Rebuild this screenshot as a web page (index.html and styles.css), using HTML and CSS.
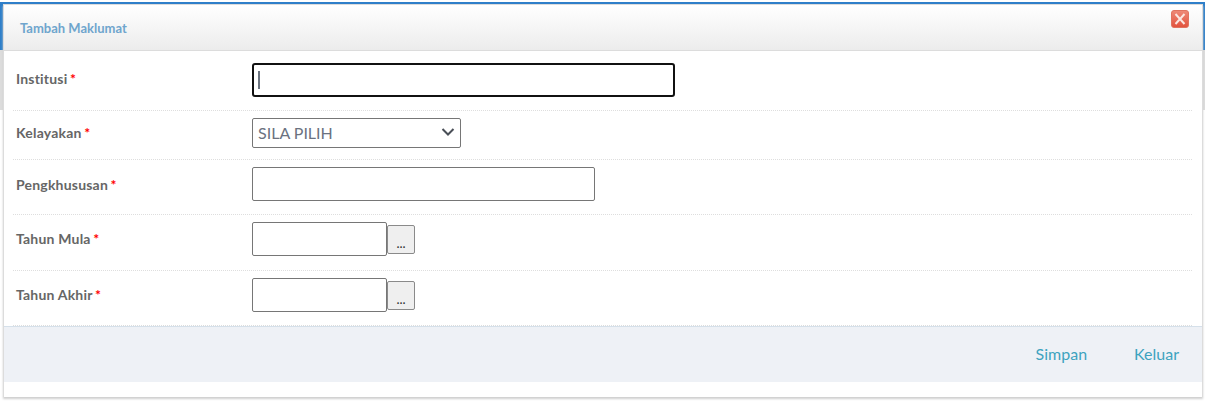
FILE: index.html
```html
<!DOCTYPE html>
<html>
<head>
  <link rel="stylesheet" href="styles.css">
</head>
<body>

<div class="page">
  <div class="side-strip strip-left"></div>
  <div class="side-strip strip-right"></div>
  <div class="modal">
    <div class="modal-header">
      <span class="modal-title">Tambah Maklumat</span>
      <button class="close-btn" type="button">
        <svg width="18" height="18" viewBox="0 0 18 18">
          <defs>
            <linearGradient id="closeFill" x1="0" y1="0" x2="0" y2="1">
              <stop offset="0" stop-color="#ee8a78"/>
              <stop offset="1" stop-color="#e2513c"/>
            </linearGradient>
          </defs>
          <rect x="0.5" y="0.5" width="17" height="17" rx="2.5" fill="url(#closeFill)" stroke="#e0735f"/>
          <path d="M4.5 4 L13.5 14 M13.5 4 L4.5 14" stroke="#fbe6e0" stroke-width="2"/>
        </svg>
      </button>
    </div>

    <form class="modal-body">
      <div class="form-row row-first">
        <label class="form-label">Institusi <span class="req">*</span></label>
        <div class="input-focus"><span class="caret"></span></div>
      </div>
      <div class="form-row row-select">
        <label class="form-label">Kelayakan <span class="req">*</span></label>
        <div class="select-box">
          <span>SILA PILIH</span>
          <svg width="14" height="8" viewBox="0 0 14 8"><path d="M1.5 1 L7 6.5 L12.5 1" fill="none" stroke="#4a4f57" stroke-width="2"/></svg>
        </div>
      </div>
      <div class="form-row row-text">
        <label class="form-label">Pengkhususan <span class="req">*</span></label>
        <input class="input-text input-wide" type="text">
      </div>
      <div class="form-row row-year">
        <label class="form-label">Tahun Mula <span class="req">*</span></label>
        <input class="input-text input-year" type="text">
        <button class="dots-btn" type="button">...</button>
      </div>
      <div class="form-row row-year row-last">
        <label class="form-label">Tahun Akhir <span class="req">*</span></label>
        <input class="input-text input-year" type="text">
        <button class="dots-btn" type="button">...</button>
      </div>
    </form>

    <div class="modal-footer">
      <a class="footer-link" href="#">Simpan</a>
      <a class="footer-link" href="#">Keluar</a>
    </div>
  </div>
</div>

</body>
</html>
```

FILE: styles.css
```css
html, body {
  margin: 0;
  padding: 0;
}

body {
  font-family: Lato, "Open Sans", sans-serif;
  background-color: #fff;
  height: 401px;
  overflow: hidden;
}

.page {
  position: relative;
  padding: 0 2px 0 3px;
  border-top: 2px solid #2f7fc9;
  margin-top: 2px;
  height: 397px;
  box-sizing: border-box;
}

/* bits of the page behind the dialog */
.side-strip {
  position: absolute;
  top: 0;
  width: 3px;
  height: 106px;
  background: linear-gradient(#2f7fc9 46px, #dcdcdc 46px);
}

.strip-left {
  left: 0;
}

.strip-right {
  right: 0;
}

.modal {
  position: relative;
  background-color: #fff;
  border: 1px solid #dcdcdc;
  border-bottom: none;
  box-shadow: 0 2px 2px #cfcfcf;
  height: 393px;
  box-sizing: border-box;
}

.modal-header {
  height: 46px;
  box-sizing: border-box;
  display: flex;
  align-items: flex-start;
  justify-content: space-between;
  padding: 0 13px 0 16px;
  background: linear-gradient(#ffffff, #ececec);
  border-bottom: 1px solid #dcdcdc;
}

.modal-title {
  font-size: 13px;
  font-weight: bold;
  color: #6fa5cd;
  line-height: 46px;
}

.close-btn {
  border: none;
  background: none;
  padding: 0;
  margin-top: 5px;
  width: 18px;
  height: 18px;
}

.modal-body {
  padding: 0 10px 0 9px;
}

.form-row {
  display: flex;
  align-items: flex-start;
  box-sizing: border-box;
  border-bottom: 1px dotted #dedede;
  padding-left: 3px;
}

.row-first {
  height: 60px;
  padding-top: 12px;
}

.row-select {
  height: 49px;
  padding-top: 7px;
}

.row-text {
  height: 55px;
  padding-top: 7px;
}

.row-year {
  height: 56px;
  padding-top: 7px;
}

.row-last {
  height: 55px;
}

.form-label {
  width: 236px;
  flex-shrink: 0;
  font-size: 14px;
  letter-spacing: 0.2px;
  font-weight: bold;
  color: #666;
  line-height: 32px;
}

.row-first .form-label {
  line-height: 32px;
}

.row-select .form-label {
  line-height: 30px;
}

.row-text .form-label {
  line-height: 36px;
}

.row-year .form-label {
  line-height: 34px;
}

.req {
  color: #f00;
  margin-left: -1px;
}

.input-focus {
  width: 423px;
  height: 34px;
  box-sizing: border-box;
  border: 2px solid #111;
  border-radius: 3px;
  padding: 6px 4px;
}

.caret {
  display: block;
  width: 2px;
  height: 18px;
  background-color: #6b7480;
}

.select-box {
  width: 209px;
  height: 30px;
  box-sizing: border-box;
  border: 1px solid #767676;
  border-radius: 2px;
  display: flex;
  align-items: center;
  justify-content: space-between;
  padding: 0 5px 2px;
  font-size: 16px;
  color: #6b7280;
}

.input-text {
  height: 34px;
  box-sizing: border-box;
  border: 1px solid #767676;
  border-radius: 2px;
  background-color: #fff;
  padding: 0;
}

.input-wide {
  width: 343px;
}

.input-year {
  width: 135px;
}

.dots-btn {
  width: 28px;
  height: 29px;
  margin-top: 3px;
  padding: 6px 0 0;
  box-sizing: border-box;
  border: 1px solid #8a8a8a;
  border-radius: 2px;
  background-color: #efefef;
  font-family: Lato, sans-serif;
  font-size: 13px;
  color: #333;
}

.modal-footer {
  height: 56px;
  display: flex;
  align-items: center;
  justify-content: flex-end;
  gap: 47px;
  padding: 0 23px 3px 0;
  background-color: #eef1f6;
  border-top: 1px solid #d5e0ea;
  box-sizing: border-box;
}

.footer-link {
  font-size: 16px;
  color: #3da3bf;
  text-decoration: none;
}
```
